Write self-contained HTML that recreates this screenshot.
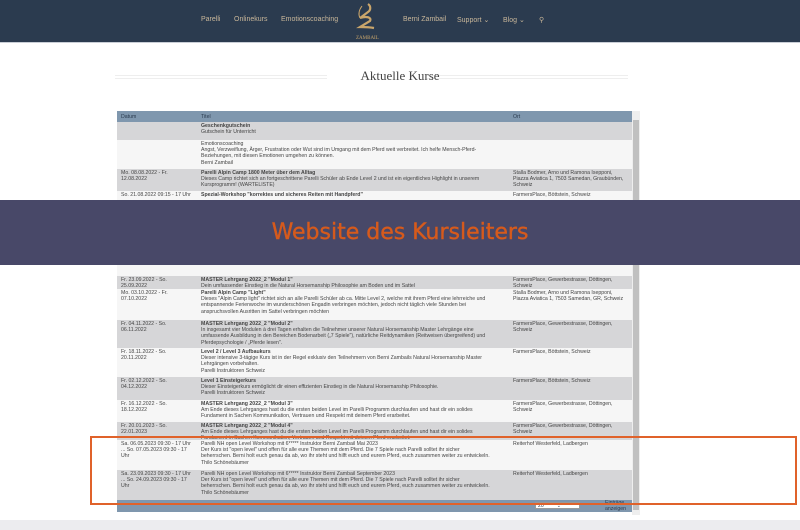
<!DOCTYPE html>
<html><head><meta charset="utf-8"><style>
*{margin:0;padding:0;box-sizing:border-box}
body{width:800px;height:530px;overflow:hidden;background:#fff;font-family:"Liberation Sans",sans-serif;position:relative}
.nav{position:absolute;left:0;top:0;width:800px;height:43px;background:#2b3b4f;border-bottom:1px solid #c9ced6}
.nav span{position:absolute;top:16px;font-size:7px;color:#c9b79a}
.title{position:absolute;top:68px;left:0;width:800px;text-align:center;font-family:"Liberation Serif",serif;font-size:13px;color:#444}
.line{position:absolute;top:75px;height:4px;border-top:1px solid #eee;border-bottom:1px solid #eee}
.tbl{position:absolute;left:117px;top:111px;width:515px;font-size:5.2px;line-height:6.2px;color:#444}
.r{position:absolute;left:0;width:515px;overflow:hidden}
.r div{position:absolute;top:1px}
.c1{left:4px;width:70px}.c2{left:84px;width:290px}.c3{left:396px;width:112px}
.g{background:#d6d6d8}.w{background:#f6f6f6}
.h{background:#7f97ae;color:#2b3b4f}
b{font-weight:bold}
.sb{position:absolute;left:632px;top:111px;width:8px;height:404px;background:#eee}
.sb i{position:absolute;left:1px;top:9px;width:6px;height:390px;background:#c0c0c0}
.ban{position:absolute;left:0;top:200px;width:800px;height:65px;background:#484868;text-align:center;color:#d65a1c;font-size:22px;line-height:65px;font-family:"DejaVu Sans","Liberation Sans",sans-serif;-webkit-text-stroke:0.4px #d65a1c}
.frame{position:absolute;left:90px;top:436px;width:707px;height:69px;border:2px solid #e0622a}
</style></head><body>
<div class="nav">
<span style="left:201px">Parelli</span><span style="left:234px">Onlinekurs</span><span style="left:281px">Emotionscoaching</span>
<svg style="position:absolute;left:346px;top:2px" width="40" height="38" viewBox="0 0 40 38"><path d="M22 2c3 2 3 6 0 8l-8 6c6-2 12-1 10 3l-10 6c4 0 9 0 14 1" stroke="#c9a56b" stroke-width="2.2" fill="none"/><path d="M16 4c-3 4-4 8-2 12" stroke="#c9a56b" stroke-width="1" fill="none"/><text x="10" y="37" font-size="5" fill="#c9a56b" font-family="Liberation Serif">ZAMBAIL</text></svg>
<span style="left:403px">Berni Zambail</span><span style="left:457px">Support ⌄</span><span style="left:503px">Blog ⌄</span><span style="left:539px">⚲</span>
</div>
<div class="line" style="left:115px;width:212px"></div>
<div class="line" style="left:426px;width:202px"></div>
<div class="title">Aktuelle Kurse</div>
<div class="tbl">
<div class="r h" style="top:0;height:11px"><div class="c1" style="top:3px">Datum</div><div class="c2" style="top:3px">Titel</div><div class="c3" style="top:3px">Ort</div></div>
<div class="r g" style="top:11px;height:18px"><div class="c2"><b>Geschenkgutschein</b><br>Gutschein für Unterricht</div></div>
<div class="r w" style="top:29px;height:29px"><div class="c2">Emotionscoaching<br>Angst, Verzweiflung, Ärger, Frustration oder Wut sind im Umgang mit dem Pferd weit verbreitet. Ich helfe Mensch-Pferd-Beziehungen, mit diesen Emotionen umgehen zu können.<br>Berni Zambail</div></div>
<div class="r g" style="top:58px;height:22px"><div class="c1">Mo. 08.08.2022 - Fr.<br>12.08.2022</div><div class="c2"><b>Parelli Alpin Camp 1800 Meter über dem Alltag</b><br>Dieses Camp richtet sich an fortgeschrittene Parelli Schüler ab Ende Level 2 und ist ein eigentliches Highlight in unserem Kursprogramm! (WARTELISTE)</div><div class="c3">Stalla Bodmer, Arno und Ramona Isepponi, Piazza Aviatica 1, 7503 Samedan, Graubünden, Schweiz</div></div>
<div class="r w" style="top:80px;height:85px"><div class="c1">So. 21.08.2022 09:15 - 17 Uhr</div><div class="c2"><b>Spezial-Workshop "korrektes und sicheres Reiten mit Handpferd"</b></div><div class="c3">FarmersPlace, Böttstein, Schweiz</div><div class="c2" style="top:152px">Zackweg und Trense über am Boden<br>Parelli Instruktoren Schweiz</div></div>
<div class="r g" style="top:165px;height:13px"><div class="c1">Fr. 23.09.2022 - So.<br>25.09.2022</div><div class="c2"><b>MASTER Lehrgang 2022_2 "Modul 1"</b><br>Dein umfassender Einstieg in die Natural Horsemanship Philosophie am Boden und im Sattel</div><div class="c3">FarmersPlace, Gewerbestrasse, Döttingen, Schweiz</div></div>
<div class="r w" style="top:178px;height:31px"><div class="c1">Mo. 03.10.2022 - Fr.<br>07.10.2022</div><div class="c2"><b>Parelli Alpin Camp "Light"</b><br>Dieses "Alpin Camp light" richtet sich an alle Parelli Schüler ab ca. Mitte Level 2, welche mit ihrem Pferd eine lehrreiche und entspannende Ferienwoche im wunderschönen Engadin verbringen möchten, jedoch nicht täglich viele Stunden bei anspruchsvollen Ausritten im Sattel verbringen möchten</div><div class="c3">Stalla Bodmer, Arno und Ramona Isepponi, Piazza Aviatica 1, 7503 Samedan, GR, Schweiz</div></div>
<div class="r g" style="top:209px;height:28px"><div class="c1">Fr. 04.11.2022 - So.<br>06.11.2022</div><div class="c2"><b>MASTER Lehrgang 2022_2 "Modul 2"</b><br>In insgesamt vier Modulen à drei Tagen erhalten die Teilnehmer unserer Natural Horsemanship Master Lehrgänge eine umfassende Ausbildung in den Bereichen Bodenarbeit („7 Spiele"), natürliche Reitdynamiken (Reitweisen übergreifend) und Pferdepsychologie / „Pferde lesen".</div><div class="c3">FarmersPlace, Gewerbestrasse, Döttingen, Schweiz</div></div>
<div class="r w" style="top:237px;height:29px"><div class="c1">Fr. 18.11.2022 - So.<br>20.11.2022</div><div class="c2"><b>Level 2 / Level 3 Aufbaukurs</b><br>Dieser intensive 3-tägige Kurs ist in der Regel exklusiv den Teilnehmern von Berni Zambails Natural Horsemanship Master Lehrgängen vorbehalten.<br>Parelli Instruktoren Schweiz</div><div class="c3">FarmersPlace, Böttstein, Schweiz</div></div>
<div class="r g" style="top:266px;height:23px"><div class="c1">Fr. 02.12.2022 - So.<br>04.12.2022</div><div class="c2"><b>Level 1 Einsteigerkurs</b><br>Dieser Einsteigerkurs ermöglicht dir einen effizienten Einstieg in die Natural Horsemanship Philosophie.<br>Parelli Instruktoren Schweiz</div><div class="c3">FarmersPlace, Böttstein, Schweiz</div></div>
<div class="r w" style="top:289px;height:22px"><div class="c1">Fr. 16.12.2022 - So.<br>18.12.2022</div><div class="c2"><b>MASTER Lehrgang 2022_2 "Modul 3"</b><br>Am Ende dieses Lehrganges hast du die ersten beiden Level im Parelli Programm durchlaufen und hast dir ein solides Fundament in Sachen Kommunikation, Vertrauen und Respekt mit deinem Pferd erarbeitet.</div><div class="c3">FarmersPlace, Gewerbestrasse, Döttingen, Schweiz</div></div>
<div class="r g" style="top:311px;height:18px"><div class="c1">Fr. 20.01.2023 - So.<br>22.01.2023</div><div class="c2"><b>MASTER Lehrgang 2022_2 "Modul 4"</b><br>Am Ende dieses Lehrganges hast du die ersten beiden Level im Parelli Programm durchlaufen und hast dir ein solides Fundament in Sachen Kommunikation, Vertrauen und Respekt mit deinem Pferd erarbeitet.</div><div class="c3">FarmersPlace, Gewerbestrasse, Döttingen, Schweiz</div></div>
<div class="r w" style="top:329px;height:30px"><div class="c1">Sa. 06.05.2023 09:30 - 17 Uhr<br>... So. 07.05.2023 09:30 - 17<br>Uhr</div><div class="c2">Parelli NH open Level Workshop mit 6***** Instruktor Berni Zambail Mai 2023<br>Der Kurs ist "open level" und offen für alle eure Themen mit dem Pferd. Die 7 Spiele nach Parelli solltet ihr sicher beherrschen. Berni holt euch genau da ab, wo ihr steht und hilft euch und eurem Pferd, euch zusammen weiter zu entwickeln.<br>Thilo Schönebäumer</div><div class="c3">Reiterhof Westerfeld, Ladbergen</div></div>
<div class="r g" style="top:359px;height:30px"><div class="c1">Sa. 23.09.2023 09:30 - 17 Uhr<br>... So. 24.09.2023 09:30 - 17<br>Uhr</div><div class="c2">Parelli NH open Level Workshop mit 6***** Instruktor Berni Zambail September 2023<br>Der Kurs ist "open level" und offen für alle eure Themen mit dem Pferd. Die 7 Spiele nach Parelli solltet ihr sicher beherrschen. Berni holt euch genau da ab, wo ihr steht und hilft euch und eurem Pferd, euch zusammen weiter zu entwickeln.<br>Thilo Schönebäumer</div><div class="c3">Reiterhof Westerfeld, Ladbergen</div></div>
<div class="r h" style="top:389px;height:12px"><div style="left:418px;top:2px;width:45px;height:7px;background:#fff;border:1px solid #999;padding-left:2px">20 &nbsp; &nbsp; &nbsp; &nbsp; ⌄</div><div style="left:488px;top:0">Einträge<br>anzeigen</div></div>
</div>
<div class="sb"><i></i></div>
<div style="position:absolute;left:0;top:520px;width:800px;height:10px;background:#ececef"></div>
<div class="ban">Website des Kursleiters</div>
<div class="frame"></div>
</body></html>
